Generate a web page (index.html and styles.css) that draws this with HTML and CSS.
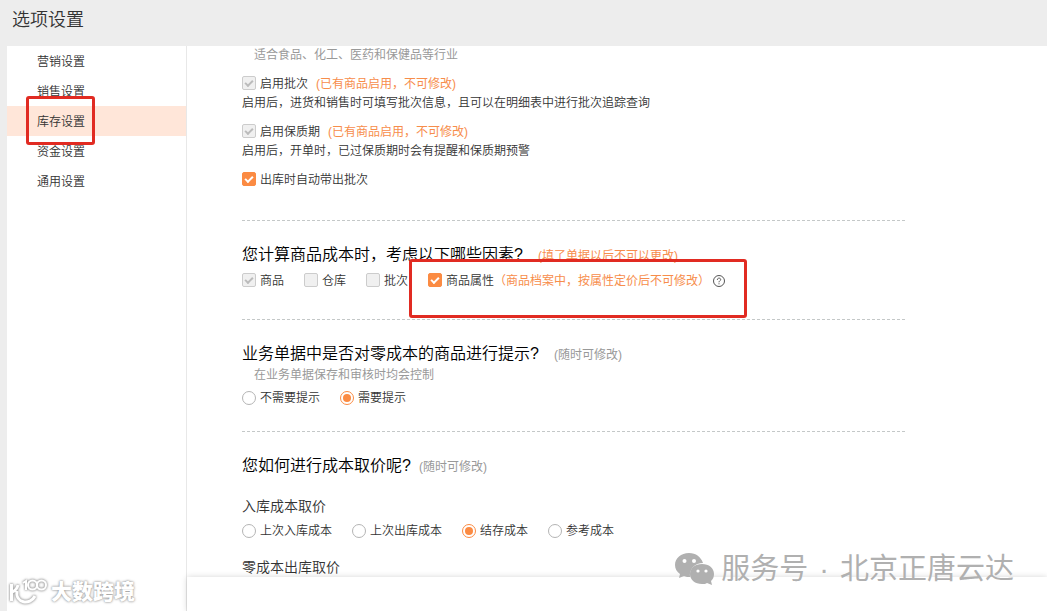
FILE: index.html
```html
<!DOCTYPE html>
<html lang="zh-CN">
<head>
    <meta charset="utf-8">
    <title>选项设置</title>
    <link rel="stylesheet" href="styles.css">
</head>
<body>
    <header class="page-header">
        <h1>选项设置</h1>
    </header>

    <div class="page-body">
        <nav class="sidebar">
            <a class="nav-item" href="#">营销设置</a>
            <a class="nav-item" href="#">销售设置</a>
            <a class="nav-item active" href="#">库存设置<span class="mark mark-nav"></span></a>
            <a class="nav-item" href="#">资金设置</a>
            <a class="nav-item" href="#">通用设置</a>
        </nav>

        <div class="main">
            <main class="settings">
                <section class="block">
                    <p class="hint">适合食品、化工、医药和保健品等行业</p>
                    <div class="row">
                        <label class="option"><input type="checkbox" checked disabled>启用批次</label>
                        <span class="note warn">(已有商品启用，不可修改)</span>
                    </div>
                    <p class="desc">启用后，进货和销售时可填写批次信息，且可以在明细表中进行批次追踪查询</p>
                    <div class="row">
                        <label class="option"><input type="checkbox" checked disabled>启用保质期</label>
                        <span class="note warn">(已有商品启用，不可修改)</span>
                    </div>
                    <p class="desc">启用后，开单时，已过保质期时会有提醒和保质期预警</p>
                    <div class="row">
                        <label class="option"><input type="checkbox" checked>出库时自动带出批次</label>
                    </div>
                </section>

                <section class="block">
                    <div class="heading">
                        <h2>您计算商品成本时，考虑以下哪些因素?</h2>
                        <span class="note wide warn">(填了单据以后不可以更改)</span>
                    </div>
                    <div class="options">
                        <label class="option"><input type="checkbox" checked disabled>商品</label>
                        <label class="option"><input type="checkbox" disabled>仓库</label>
                        <label class="option"><input type="checkbox" disabled>批次</label>
                        <div class="option-group">
                            <label class="option"><input type="checkbox" checked>商品属性</label>
                            <span class="warn">（商品档案中，按属性定价后不可修改）</span>
                            <button class="help" type="button" aria-label="帮助">
                                <svg width="12" height="12" viewBox="0 0 12 12" fill="none" stroke="#555">
                                    <circle cx="6" cy="6" r="5.5"/>
                                    <path d="M4.3 4.9C4.3 2.5 7.8 2.6 7.7 4.7C7.6 5.8 6 5.8 6 7.3M6 8.3V9.3"/>
                                </svg>
                            </button>
                            <span class="mark mark-option"></span>
                        </div>
                    </div>
                </section>

                <section class="block">
                    <div class="heading">
                        <h2>业务单据中是否对零成本的商品进行提示?</h2>
                        <span class="note wide">(随时可修改)</span>
                    </div>
                    <p class="hint">在业务单据保存和审核时均会控制</p>
                    <div class="options">
                        <label class="option"><input type="radio" name="tip">不需要提示</label>
                        <label class="option"><input type="radio" name="tip" checked>需要提示</label>
                    </div>
                </section>

                <section class="block">
                    <div class="heading">
                        <h2>您如何进行成本取价呢?</h2>
                        <span class="note">(随时可修改)</span>
                    </div>
                    <h3>入库成本取价</h3>
                    <div class="options">
                        <label class="option"><input type="radio" name="price">上次入库成本</label>
                        <label class="option"><input type="radio" name="price">上次出库成本</label>
                        <label class="option"><input type="radio" name="price" checked>结存成本</label>
                        <label class="option"><input type="radio" name="price">参考成本</label>
                    </div>
                    <h3>零成本出库取价</h3>
                </section>
            </main>
            <footer class="footer"></footer>
        </div>
    </div>

    <div class="brand">
        <svg width="40" height="30" viewBox="0 0 40 30" fill="none" stroke="#fff">
            <path d="M3.500 7V24M4 15C7 14 9 12 10 8M9 14C7 26 22 29 27 19" stroke-width="3"/>
            <path d="M15 6L18 4V13" stroke-width="2"/>
            <circle cx="24.500" cy="8" r="4.500" stroke-width="2"/>
            <circle cx="33.500" cy="8" r="4.500" stroke-width="2"/>
        </svg>
        <span>大数跨境</span>
    </div>

    <div class="account">
        <svg width="40" height="32" viewBox="0 0 40 32">
            <path fill="#b0b0b0" d="M14 0C6 0 0 5 0 12C0 16 2 19 5 21L4 25L9 23C11 24 13 24 15 24C14 16 20 10 28 10C26 4 21 0 14 0Z"/>
            <path fill="#b0b0b0" d="M27 11C20 11 15 15 15 21C15 27 20 31 27 31C29 31 31 31 32 30L37 32L36 28C38 26 39 24 39 21C39 15 34 11 27 11Z"/>
            <g fill="#fff">
                <circle cx="9.500" cy="8" r="2"/>
                <circle cx="19" cy="8" r="2"/>
                <circle cx="23" cy="18" r="1.600"/>
                <circle cx="31" cy="18" r="1.600"/>
            </g>
        </svg>
        <span>服务号</span><span>·</span><span>北京正唐云达</span>
    </div>
</body>
</html>
```
FILE: styles.css
```css
* {
    box-sizing: border-box;
}

body {
    display: flex;
    flex-direction: column;
    height: 100vh;
    margin: 0;
    overflow: hidden;
    background: #ededed;
    color: #333;
    font-family: "Liberation Sans", "Noto Sans CJK SC", sans-serif;
    font-size: 12px;
    font-weight: 350;
    line-height: 18px;
}

h1, h2, h3, p {
    margin: 0;
    font-weight: 350;
}

.page-header {
    padding: 8px 12px 14px;
}

h1 {
    font-size: 18px;
    line-height: 24px;
}

.page-body {
    display: flex;
    flex: 1;
    min-height: 0;
    padding-left: 7px;
}

/* left menu */
.sidebar {
    flex: none;
    width: 180px;
    border-right: 1px solid #e8e8e8;
    background: #fff;
}

.nav-item {
    display: block;
    position: relative;
    height: 30px;
    padding-left: 30px;
    color: #333;
    line-height: 32px;
    text-decoration: none;
}

.nav-item.active {
    background: #ffe6d9;
}

/* red frames */
.mark {
    position: absolute;
    z-index: 2;
    border: 3px solid #e12b22;
    border-radius: 3px;
    pointer-events: none;
}

.mark-nav {
    top: -10px;
    left: 19px;
    width: 69px;
    height: 49px;
}

.mark-option {
    top: -12px;
    left: -19px;
    width: 338px;
    height: 59px;
}

/* settings */
.main {
    display: flex;
    flex: 1;
    flex-direction: column;
    min-width: 0;
    background: #fff;
}

.settings {
    flex: 1;
    min-height: 0;
    overflow: hidden;
    padding: 0 142px 0 55px;
}

.block {
    padding: 22px 0 23px;
    border-bottom: 1px dashed #c4c8c8;
}

.block:first-child {
    padding: 0 0 30px;
}

.block:nth-child(2) {
    padding-bottom: 28px;
}

.block:last-child {
    border-bottom: 0;
}

.hint {
    padding-left: 12px;
    color: #999;
    font-weight: 400;
}

.row {
    display: flex;
    align-items: center;
    height: 20px;
    margin-top: 10px;
}

.heading {
    display: flex;
    align-items: baseline;
}

h2 {
    color: #000;
    font-size: 16px;
    line-height: 24px;
}

h3 {
    margin-top: 18px;
    font-size: 14px;
    line-height: 20px;
}

.note {
    margin-left: 8px;
    color: #999;
    font-weight: 400;
}

.note.wide {
    margin-left: 15px;
}

.warn,
.note.warn {
    color: #f78d4b;
    font-weight: 400;
}

.options {
    display: flex;
    gap: 20px;
    margin-top: 4px;
}

h3 + .options {
    margin-top: 5px;
}

.options + h3 {
    margin-top: 16px;
}

.option,
.option-group {
    display: flex;
    align-items: center;
    height: 20px;
    white-space: nowrap;
}

.option-group {
    position: relative;
}

input {
    appearance: none;
    display: grid;
    place-content: center;
    width: 14px;
    height: 14px;
    margin: 0 4px 0 0;
    border: 1px solid #b4b4b4;
    background: #fff;
}

input[type="checkbox"] {
    margin-bottom: 2px;
    border-radius: 2px;
}

input[type="checkbox"]:checked {
    border-color: #fb8b43;
    background: #fb8b43;
}

input[type="checkbox"]:disabled {
    border-color: #ccc;
    background: #f0f0f0;
}

input[type="checkbox"]:checked::after {
    content: "";
    width: 8px;
    height: 5px;
    margin-bottom: 2px;
    box-sizing: border-box;
    border: solid #fff;
    border-width: 0 0 2px 2px;
    transform: rotate(-45deg);
}

input[type="checkbox"]:disabled::after {
    border-color: #bbb;
}

input[type="radio"] {
    border-radius: 50%;
}

input[type="radio"]:checked {
    border-color: #fb8b43;
}

input[type="radio"]:checked::after {
    content: "";
    width: 8px;
    height: 8px;
    border-radius: 50%;
    background: #fb8b43;
}

.help {
    display: flex;
    margin-left: 3px;
    padding: 0;
    border: 0;
    background: none;
}

.footer {
    position: relative;
    flex: none;
    height: 34px;
    background: #fff;
    box-shadow: 0 0 6px rgba(0, 0, 0, 0.16);
}

/* watermarks */
.brand {
    display: flex;
    position: absolute;
    bottom: 4px;
    left: 8px;
    z-index: 3;
    gap: 3px;
    color: #fff;
    font-size: 21px;
    font-weight: 900;
    line-height: 30px;
    text-shadow: 0 0 2px #999, 0 0 3px #aaa;
}

.brand svg {
    overflow: visible;
    filter: drop-shadow(0 0 1px #999) drop-shadow(0 0 1px #bbb);
}

.account {
    display: flex;
    position: absolute;
    right: 33px;
    bottom: 24px;
    z-index: 3;
    align-items: center;
    color: #b0b0b0;
    font-size: 29px;
    font-weight: 400;
    line-height: 36px;
}

.account span {
    margin-left: 11px;
}

.account svg + span {
    margin-left: 6px;
}
```
